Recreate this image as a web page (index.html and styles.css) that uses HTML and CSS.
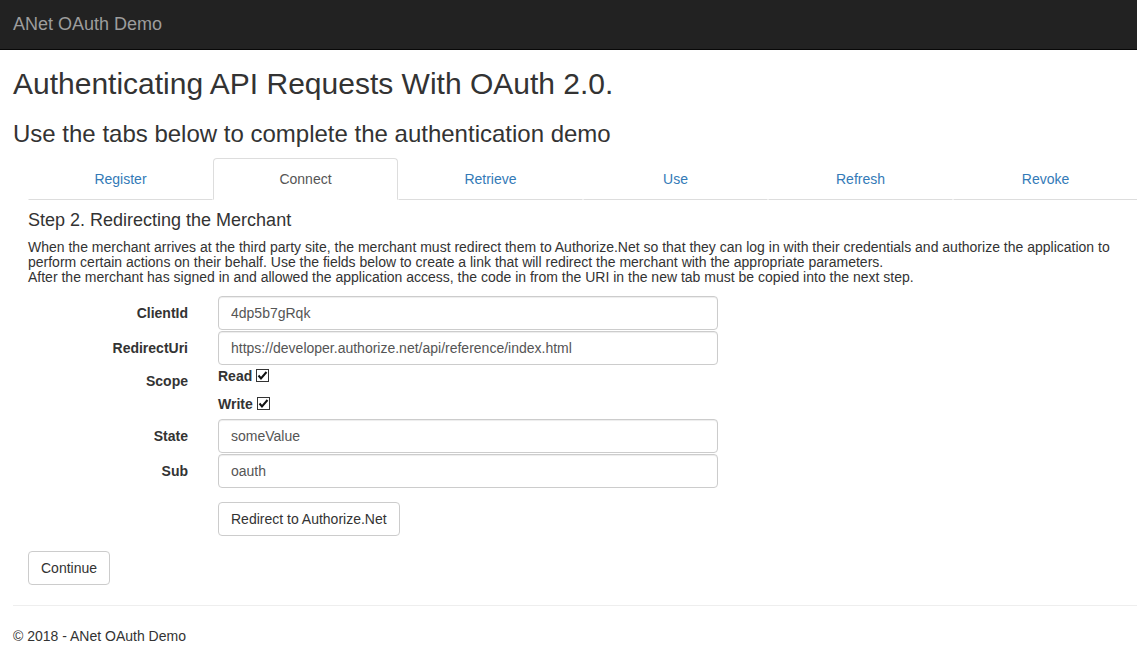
FILE: index.html
```html
<!DOCTYPE html>
<html lang="en">
<head>
<meta charset="utf-8">
<title>ANet OAuth Demo</title>
<link rel="stylesheet" href="styles.css">
</head>
<body>
<header class="navbar">
  <a class="brand" href="#">ANet OAuth Demo</a>
</header>
<main class="page">
  <h1 class="title">Authenticating API Requests With OAuth 2.0.</h1>
  <h2 class="subtitle">Use the tabs below to complete the authentication demo</h2>
  <section class="demo">
    <ul class="tabs">
      <li class="tab"><a href="#">Register</a></li>
      <li class="tab active"><a href="#">Connect</a></li>
      <li class="tab"><a href="#">Retrieve</a></li>
      <li class="tab"><a href="#">Use</a></li>
      <li class="tab"><a href="#">Refresh</a></li>
      <li class="tab"><a href="#">Revoke</a></li>
    </ul>
    <h4 class="step">Step 2. Redirecting the Merchant</h4>
    <p class="desc">When the merchant arrives at the third party site, the merchant must redirect them to Authorize.Net so that they can log in with their credentials and authorize the application to perform certain actions on their behalf. Use the fields below to create a link that will redirect the merchant with the appropriate parameters.<br>After the merchant has signed in and allowed the application access, the code in from the URI in the new tab must be copied into the next step.</p>
    <form class="form">
      <div class="row">
        <label class="lbl">ClientId</label>
        <input class="field" type="text" value="4dp5b7gRqk">
      </div>
      <div class="row">
        <label class="lbl">RedirectUri</label>
        <input class="field" type="text" value="https://developer.authorize.net/api/reference/index.html">
      </div>
      <div class="row scope">
        <label class="lbl lbl-scope">Scope</label>
        <div class="checks">
          <div class="check">Read <span class="cb"><svg width="13" height="13" viewBox="0 0 13 13"><rect x="0.5" y="0.5" width="12" height="12" fill="#fff" stroke="#333"/><path d="M2.5 6.5 L5 9.5 L10.5 3" fill="none" stroke="#111" stroke-width="2"/></svg></span></div>
          <div class="check">Write <span class="cb"><svg width="13" height="13" viewBox="0 0 13 13"><rect x="0.5" y="0.5" width="12" height="12" fill="#fff" stroke="#333"/><path d="M2.5 6.5 L5 9.5 L10.5 3" fill="none" stroke="#111" stroke-width="2"/></svg></span></div>
        </div>
      </div>
      <div class="row">
        <label class="lbl">State</label>
        <input class="field" type="text" value="someValue">
      </div>
      <div class="row">
        <label class="lbl">Sub</label>
        <input class="field" type="text" value="oauth">
      </div>
      <div class="row btn-row">
        <span></span>
        <div><button class="btn" type="button">Redirect to Authorize.Net</button></div>
      </div>
    </form>
    <button class="btn continue" type="button">Continue</button>
  </section>
  <hr class="rule">
  <footer class="footer">&copy; 2018 - ANet OAuth Demo</footer>
</main>
</body>
</html>
```
FILE: styles.css
```css
html { overflow: hidden; }
* { box-sizing: border-box; }
body {
  margin: 0;
  font-family: "Liberation Sans", Arial, sans-serif;
  font-size: 14px;
  line-height: 20px;
  color: #333;
  background: #fff;
}
.navbar {
  height: 50px;
  background: #222;
  border-bottom: 1px solid #080808;
  padding-left: 13px;
}
.brand {
  display: block;
  font-size: 18px;
  line-height: 48px;
  color: #9d9d9d;
  text-decoration: none;
}
.page {
  padding-left: 13px;
  width: 1150px;
}
.title {
  margin: 17px 0 0;
  font-size: 30px;
  line-height: 33px;
  font-weight: 400;
}
.subtitle {
  margin: 21px 0 0;
  font-size: 24px;
  line-height: 26px;
  font-weight: 400;
}
.demo {
  margin-left: 15px;
  width: 1110px;
}
.tabs {
  list-style: none;
  margin: 11px 0 0;
  padding: 0;
  display: flex;
}
.tab { flex: 1 1 0; }
.tab a {
  display: block;
  text-align: center;
  padding: 10px 15px;
  line-height: 20px;
  color: #337ab7;
  text-decoration: none;
  border: 1px solid transparent;
  border-bottom-color: #ddd;
  border-radius: 4px 4px 0 0;
}
.tab.active a {
  color: #555;
  border-color: #ddd;
  border-bottom-color: #fff;
}
.step {
  margin: 10px 0 0;
  font-size: 18px;
  line-height: 20px;
  font-weight: 400;
}
.desc {
  margin: 10px 0 0;
  font-size: 14px;
  line-height: 15px;
}
.form {
  margin-top: 11px;
  display: flex;
  flex-direction: column;
  gap: 1px;
}
.row {
  display: grid;
  grid-template-columns: 160px 500px;
  column-gap: 30px;
  align-items: center;
}
.lbl {
  text-align: right;
  font-weight: 700;
}
.field {
  height: 34px;
  padding: 6px 12px;
  font: inherit;
  color: #555;
  border: 1px solid #ccc;
  border-radius: 4px;
  box-shadow: inset 0 1px 1px rgba(0,0,0,.075);
  background: #fff;
}
.scope {
  align-items: start;
  margin-bottom: 4px;
}
.lbl-scope { padding-top: 5px; }
.checks {
  display: flex;
  flex-direction: column;
  gap: 8px;
}
.check {
  font-weight: 700;
  display: flex;
  align-items: center;
  gap: 4px;
  height: 20px;
}
.cb { display: inline-flex; margin-top: -2px; }
.btn-row { margin-top: 13px; }
.btn {
  height: 34px;
  padding: 6px 12px;
  font: inherit;
  color: #333;
  background: #fff;
  border: 1px solid #ccc;
  border-radius: 4px;
}
.continue { margin-top: 15px; }
.rule {
  margin: 20px 0 0;
  border: 0;
  border-top: 1px solid #eee;
  width: 1125px;
}
.footer {
  margin-top: 20px;
  line-height: 20px;
}
```
